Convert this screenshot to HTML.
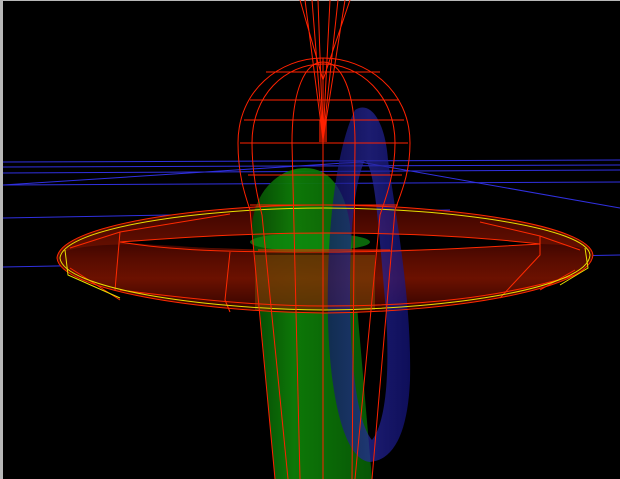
<!DOCTYPE html>
<html><head><style>
html,body{margin:0;padding:0;background:#000;width:620px;height:479px;overflow:hidden}
svg{display:block}
</style></head><body>
<svg width="620" height="479" viewBox="0 0 620 479" xmlns="http://www.w3.org/2000/svg">
<defs>
<linearGradient id="gr" x1="0" x2="1" y1="0" y2="0">
<stop offset="0" stop-color="#064a04"/><stop offset="0.35" stop-color="#0e7e08"/><stop offset="1" stop-color="#075a05"/>
</linearGradient>
<linearGradient id="tor" x1="0" x2="0" y1="0" y2="1">
<stop offset="0" stop-color="#3a0400"/><stop offset="0.5" stop-color="#701200"/><stop offset="1" stop-color="#300300"/>
</linearGradient>
<linearGradient id="bl" x1="0" x2="1">
<stop offset="0" stop-color="#141470"/><stop offset="0.5" stop-color="#2828a0"/><stop offset="1" stop-color="#141480"/>
</linearGradient>
</defs>
<rect width="620" height="479" fill="#000"/>
<rect x="0" y="0" width="620" height="1" fill="#b8b8b8"/>
<rect x="0" y="0" width="3" height="479" fill="#b8b8b8"/>
<g stroke="#3030e0" stroke-width="1" fill="none">
<line x1="3" y1="162" x2="620" y2="160"/>
<line x1="3" y1="167" x2="620" y2="165"/>
<line x1="3" y1="173" x2="620" y2="170"/>
<line x1="3" y1="185" x2="360" y2="162"/>
<line x1="360" y1="162" x2="620" y2="208"/>
<line x1="3" y1="218" x2="450" y2="210"/>
<line x1="3" y1="267" x2="620" y2="255"/>
<line x1="3" y1="185" x2="620" y2="182"/>
</g>
<path d="M57,258 C60,225 200,205 325,205 C450,205 590,225 593,255 C590,290 450,312 325,313 C200,312 60,290 57,258 Z M120,242 C200,236 260,233 325,233 C400,233 470,236 540,244 C470,250 400,250 325,250 C250,250 180,248 120,242 Z" fill="url(#tor)" fill-rule="evenodd"/>
<path d="M252,225 C255,190 280,168 305,168 C330,168 345,190 350,225 L372,479 L275,479 Z" fill="url(#gr)" opacity="0.95"/>
<ellipse cx="310" cy="242" rx="60" ry="9" fill="#109010" opacity="0.7"/>
<path d="M57,258 C60,245 120,242 180,246 C250,252 300,252 325,252 C400,252 470,248 540,244 C580,245 593,250 593,255 C590,290 450,312 325,313 C200,312 60,290 57,258 Z" fill="url(#tor)" opacity="0.8"/>
<rect x="255" y="255" width="120" height="55" fill="#7a4a08" opacity="0.55"/>
<path d="M355,110 C370,100 385,120 388,160 C395,210 412,300 410,380 C408,430 395,460 370,462 C345,460 330,400 328,320 C326,240 335,150 355,110 Z M365,160 C375,170 378,220 385,300 C390,360 388,420 372,440 C355,420 350,350 350,290 C350,230 355,180 365,160 Z" fill="url(#bl)" fill-rule="evenodd" opacity="0.7"/>
<g fill="none" stroke="#ff2a00" stroke-width="1">
<path d="M57,258 C60,225 200,205 325,205 C450,205 590,225 593,255 C590,290 450,312 325,313 C200,312 60,290 57,258 Z"/>
<path d="M70,248 L120,232 L230,214 M120,232 L115,290 M70,268 L120,300 M230,252 L225,300 L230,312"/>
<path d="M580,250 L540,236 L480,222 M540,236 L540,255 L500,298 M575,270 L540,290"/>
<path d="M120,242 C200,236 260,233 325,233 C400,233 470,236 540,244"/>
<path d="M120,242 C180,252 250,252 325,252 C400,252 470,248 540,244"/>
<path d="M120,290 C200,300 260,306 325,306 C420,306 500,298 575,275"/>
</g>
<g fill="none" stroke="#e8e000" stroke-width="1">
<path d="M60,258 C63,228 200,208 325,208 C450,208 588,228 590,255 C588,288 450,309 325,310 C200,309 63,288 60,258 Z"/>
<path d="M65,250 L68,275 L120,298"/>
<path d="M585,248 L588,268 L560,285"/>
</g>
<g fill="none" stroke="#ff2200" stroke-width="1">
<path d="M238,143 C238,90 280,58 323,58 C366,58 410,90 410,143 C410,175 400,195 395,210 L372,479 M238,143 C238,175 245,195 250,210 L275,479"/>
<path d="M252,143 C252,95 285,64 323,64 C360,64 395,95 395,143 C395,175 385,200 380,215 L355,479 M252,143 C252,175 258,200 262,215 L288,479"/>
<path d="M292,143 C292,90 305,62 323,62 C341,62 355,90 355,143 L352,479 M292,143 L300,479"/>
<path d="M323,58 L323,479"/>
<path d="M266,72 L380,72 M250,100 L398,100 M240,143 L408,143 M244,120 L404,120 M248,175 L402,175 M250,205 L398,205 M258,250 L390,250"/>
<path d="M305,0 L323,140 L345,0 M312,0 L323,140 L338,0 M318,0 L323,140 L330,0 M300,0 L323,80 M350,0 L323,80"/>
</g>
<rect x="319" y="120" width="8" height="22" fill="#ff2200" opacity="0.6"/>
</svg>
</body></html>
